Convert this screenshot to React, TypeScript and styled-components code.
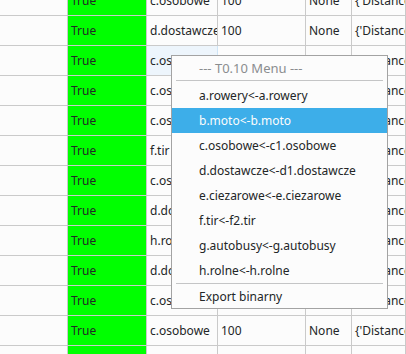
import React from "react";
import styled, { createGlobalStyle } from "styled-components";

const GlobalStyle = createGlobalStyle`
  html, body {
    margin: 0;
    padding: 0;
    background: #fcfcfc;
  }
  body {
    font-family: "Noto Sans", "DejaVu Sans", sans-serif;
    font-size: 12px;
    color: #232627;
  }
`;

const Screen = styled.div`
  position: relative;
  width: 406px;
  height: 354px;
  overflow: hidden;
  background: #fcfcfc;
`;

const Table = styled.div`
  display: grid;
  grid-template-columns: 68px 79px 71px 88px 46px 1fr;
  grid-auto-rows: 30px;
  margin-top: -14px;
`;

const Cell = styled.div<{ $green?: boolean; $selected?: boolean }>`
  display: flex;
  align-items: center;
  padding: 0 4px 1px 3px;
  white-space: nowrap;
  overflow: hidden;
  border-right: 1px solid ${p => (p.$selected ? "#cfe5f6" : "#cacaca")};
  border-bottom: 1px solid #cacaca;
  background: ${p => (p.$green ? "#00ff00" : p.$selected ? "#edf5fc" : "#fcfcfc")};
  color: #232627;
`;

const Menu = styled.div`
  position: absolute;
  left: 171px;
  top: 55px;
  width: 217px;
  box-sizing: border-box;
  border: 1px solid #a3a3a3;
  background: #fcfcfc;
  display: flex;
  flex-direction: column;
`;

const MenuTitle = styled.div`
  height: 24px;
  display: flex;
  align-items: center;
  padding-left: 27px;
  font-size: 13px;
  color: #8a8d8f;
`;

const MenuItem = styled.div<{ $active?: boolean; $h?: number }>`
  height: ${p => p.$h ?? 25}px;
  display: flex;
  align-items: center;
  padding-left: 27px;
  background: ${p => (p.$active ? "#3daee9" : "transparent")};
  color: ${p => (p.$active ? "#fcfcfc" : "#232627")};
`;

const Separator = styled.div<{ $gap?: number }>`
  height: 1px;
  background: #c4c5c6;
  margin: 0 4px ${p => p.$gap ?? 0}px 4px;
`;

const col2 = [
  "c.osobowe",
  "d.dostawcze",
  "c.osobowe",
  "c.osobowe",
  "c.osobowe",
  "f.tir",
  "c.osobowe",
  "d.dostawcze",
  "h.rolne",
  "d.dostawcze",
  "c.osobowe",
  "c.osobowe",
  "",
];

const menuItems = [
  "a.rowery<-a.rowery",
  "b.moto<-b.moto",
  "c.osobowe<-c1.osobowe",
  "d.dostawcze<-d1.dostawcze",
  "e.ciezarowe<-e.ciezarowe",
  "f.tir<-f2.tir",
  "g.autobusy<-g.autobusy",
  "h.rolne<-h.rolne",
];

export default function App() {
  return (
    <Screen>
      <GlobalStyle />
      <Table>
        {col2.map((name, i) => {
          const last = name === "";
          return (
            <React.Fragment key={i}>
              <Cell />
              <Cell $green>{last ? "" : "True"}</Cell>
              <Cell $selected={i === 2}>{name}</Cell>
              <Cell>{last ? "" : "100"}</Cell>
              <Cell>{last ? "" : "None"}</Cell>
              <Cell>{last ? "" : "{'Distance': 100}"}</Cell>
            </React.Fragment>
          );
        })}
      </Table>
      <Menu>
        <MenuTitle>--- T0.10 Menu ---</MenuTitle>
        <Separator $gap={2} />
        {menuItems.map((m, i) => (
          <MenuItem key={m} $active={i === 1}>
            {m}
          </MenuItem>
        ))}
        <Separator />
        <MenuItem $h={24}>Export binarny</MenuItem>
      </Menu>
    </Screen>
  );
}
